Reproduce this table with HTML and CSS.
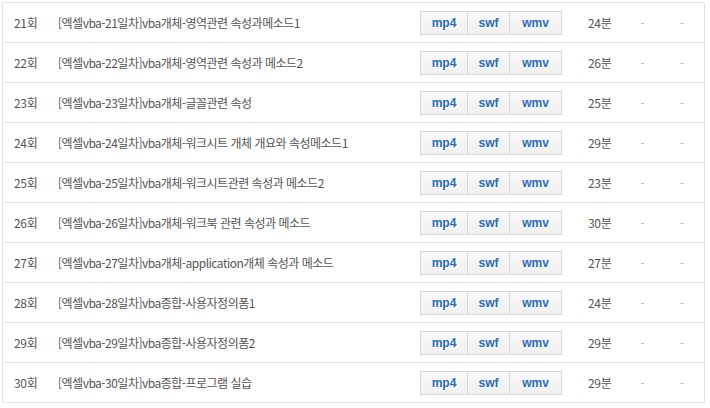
FILE: index.html
```html
<!DOCTYPE html>
<html lang="ko">
  <head>
    <meta charset="UTF-8" />
    <title>강의 목록</title>
    <link rel="stylesheet" href="styles.css">
  </head>
  <body>
    <div class="lecture-list">
      <div class="lecture__row">
        <span class="no">21회</span>
        <span class="title">[엑셀vba-21일차]vba개체-영역관련 속성과메소드1</span>
        <span class="files"><a>mp4</a><a>swf</a><a>wmv</a></span>
        <span class="time">24분</span>
        <span class="dash">-</span>
        <span class="dash">-</span>
      </div>
      <div class="lecture__row">
        <span class="no">22회</span>
        <span class="title">[엑셀vba-22일차]vba개체-영역관련 속성과 메소드2</span>
        <span class="files"><a>mp4</a><a>swf</a><a>wmv</a></span>
        <span class="time">26분</span>
        <span class="dash">-</span>
        <span class="dash">-</span>
      </div>
      <div class="lecture__row">
        <span class="no">23회</span>
        <span class="title">[엑셀vba-23일차]vba개체-글꼴관련 속성</span>
        <span class="files"><a>mp4</a><a>swf</a><a>wmv</a></span>
        <span class="time">25분</span>
        <span class="dash">-</span>
        <span class="dash">-</span>
      </div>
      <div class="lecture__row">
        <span class="no">24회</span>
        <span class="title">[엑셀vba-24일차]vba개체-워크시트 개체 개요와 속성메소드1</span>
        <span class="files"><a>mp4</a><a>swf</a><a>wmv</a></span>
        <span class="time">29분</span>
        <span class="dash">-</span>
        <span class="dash">-</span>
      </div>
      <div class="lecture__row">
        <span class="no">25회</span>
        <span class="title">[엑셀vba-25일차]vba개체-워크시트관련 속성과 메소드2</span>
        <span class="files"><a>mp4</a><a>swf</a><a>wmv</a></span>
        <span class="time">23분</span>
        <span class="dash">-</span>
        <span class="dash">-</span>
      </div>
      <div class="lecture__row">
        <span class="no">26회</span>
        <span class="title">[엑셀vba-26일차]vba개체-워크북 관련 속성과 메소드</span>
        <span class="files"><a>mp4</a><a>swf</a><a>wmv</a></span>
        <span class="time">30분</span>
        <span class="dash">-</span>
        <span class="dash">-</span>
      </div>
      <div class="lecture__row">
        <span class="no">27회</span>
        <span class="title">[엑셀vba-27일차]vba개체-application개체 속성과 메소드</span>
        <span class="files"><a>mp4</a><a>swf</a><a>wmv</a></span>
        <span class="time">27분</span>
        <span class="dash">-</span>
        <span class="dash">-</span>
      </div>
      <div class="lecture__row">
        <span class="no">28회</span>
        <span class="title">[엑셀vba-28일차]vba종합-사용자정의폼1</span>
        <span class="files"><a>mp4</a><a>swf</a><a>wmv</a></span>
        <span class="time">24분</span>
        <span class="dash">-</span>
        <span class="dash">-</span>
      </div>
      <div class="lecture__row">
        <span class="no">29회</span>
        <span class="title">[엑셀vba-29일차]vba종합-사용자정의폼2</span>
        <span class="files"><a>mp4</a><a>swf</a><a>wmv</a></span>
        <span class="time">29분</span>
        <span class="dash">-</span>
        <span class="dash">-</span>
      </div>
      <div class="lecture__row">
        <span class="no">30회</span>
        <span class="title">[엑셀vba-30일차]vba종합-프로그램 실습</span>
        <span class="files"><a>mp4</a><a>swf</a><a>wmv</a></span>
        <span class="time">29분</span>
        <span class="dash">-</span>
        <span class="dash">-</span>
      </div>
    </div>
  </body>
</html>
```

FILE: styles.css
```css
* {
  margin: 0;
  padding: 0;
  box-sizing: border-box;
}
body {
  background: #fff;
  font-family: "Noto Sans CJK KR", "Noto Sans", sans-serif;
  font-size: 12px;
  color: #555;
}

.lecture-list {
  width: 703px;
  margin: 2px 0 0 2px;
  border: 1px solid #e2e2e2;
  border-bottom: none;
}

.lecture__row {
  display: grid;
  grid-template-columns: 52px 355px 165px 50px 35px 44px;
  align-items: center;
  height: 40px;
  border-bottom: 1px solid #e2e2e2;
}

.no {
  padding-left: 11px;
  letter-spacing: -0.3px;
}
.title {
  padding-left: 3px;
  white-space: nowrap;
  letter-spacing: -0.5px;
}

.files {
  display: flex;
  padding-left: 10px;
}
.files a {
  display: block;
  height: 24px;
  line-height: 22px;
  text-align: center;
  font-family: "Liberation Sans", Arial, sans-serif;
  font-weight: bold;
  font-size: 12px;
  color: #2c6fb4;
  background: linear-gradient(#f9f9f9, #f0f0f0);
  border: 1px solid #d8d8d8;
  cursor: pointer;
}
.files a:nth-child(1) {
  width: 48px;
}
.files a:nth-child(2) {
  width: 42px;
  border-left: none;
}
.files a:nth-child(3) {
  width: 52px;
  border-left: none;
}

.time {
  padding-left: 13px;
  letter-spacing: -0.3px;
}
.dash {
  text-align: center;
  color: #bbb;
}
```
